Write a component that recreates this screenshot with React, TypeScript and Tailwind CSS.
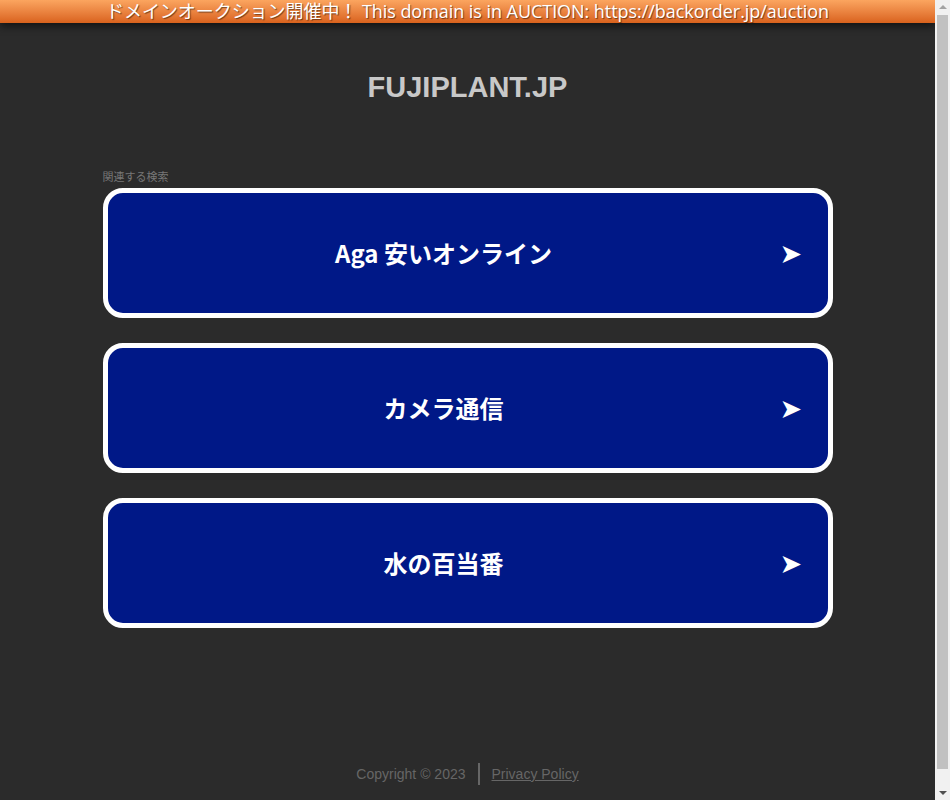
import React from 'react';

const searches = ['Aga 安いオンライン', 'カメラ通信', '水の百当番'];

function SearchCard({ label }: { label: string }) {
  return (
    <a
      href="#"
      className="flex h-[130px] items-center rounded-[20px] border-[5px] border-white bg-[#001887] text-white no-underline"
    >
      <span className="flex-1 text-center text-[24px] font-bold">{label}</span>
      <span className="w-[48px] text-[27px] leading-none" style={{ fontFamily: '"DejaVu Sans", sans-serif' }}>➤</span>
    </a>
  );
}

// fake browser scrollbar as in the screenshot
function Scrollbar() {
  return (
    <div className="flex h-[800px] w-[15px] flex-col items-center bg-[#f1f1f1]">
      <div className="mt-[5px] h-0 w-0 border-x-[4px] border-b-[4px] border-x-transparent border-b-[#a3a3a3]" />
      <div className="mt-[6px] w-[11px] flex-1 bg-[#c1c1c1]" />
      <div className="mb-[5px] mt-[22px] h-0 w-0 border-x-[4px] border-t-[4px] border-x-transparent border-t-[#505050]" />
    </div>
  );
}

export default function App() {
  return (
    <div className="flex h-[800px] overflow-hidden bg-[#2b2b2b]">
      <div
        className="w-[935px]"
        style={{ fontFamily: '"Liberation Sans", Arial, "Noto Sans CJK JP", sans-serif' }}
      >
        {/* auction banner */}
        <div
          className="flex h-[23px] items-center justify-center bg-gradient-to-b from-[#fba55f] to-[#d9621c] text-[18px] text-white shadow-[0_3px_8px_rgba(0,0,0,0.6)] [text-shadow:1px_1px_1px_rgba(0,0,0,0.5)]"
          style={{ fontFamily: '"Open Sans", "Noto Sans CJK JP", sans-serif' }}
        >
          <span className="tracking-[-0.05px]">ドメインオークション開催中！ This domain is in AUCTION: https://backorder.jp/auction</span>
        </div>

        <h1 className="pt-[45px] text-center text-[29px] font-bold leading-[38px] text-[#c8c8c8]">FUJIPLANT.JP</h1>

        <div className="mx-auto mt-[64px] w-[730px]">
          <div
            className="mb-[5px] text-[11px] leading-[13px] text-[#777]"
            style={{ fontFamily: '"Noto Sans CJK JP", sans-serif' }}
          >
            関連する検索
          </div>
          <div
            className="flex flex-col gap-[25px]"
            style={{ fontFamily: '"Noto Sans CJK JP", sans-serif' }}
          >
            {searches.map((s) => (
              <SearchCard key={s} label={s} />
            ))}
          </div>
        </div>

        <div className="mt-[135px] flex items-center justify-center text-[14px] text-[#666]">
          <span>Copyright © 2023</span>
          <span className="mx-[12px] h-[22px] w-[2px] bg-[#666]" />
          <a href="#" className="text-[#666] underline">Privacy Policy</a>
        </div>
      </div>
      <Scrollbar />
    </div>
  );
}
